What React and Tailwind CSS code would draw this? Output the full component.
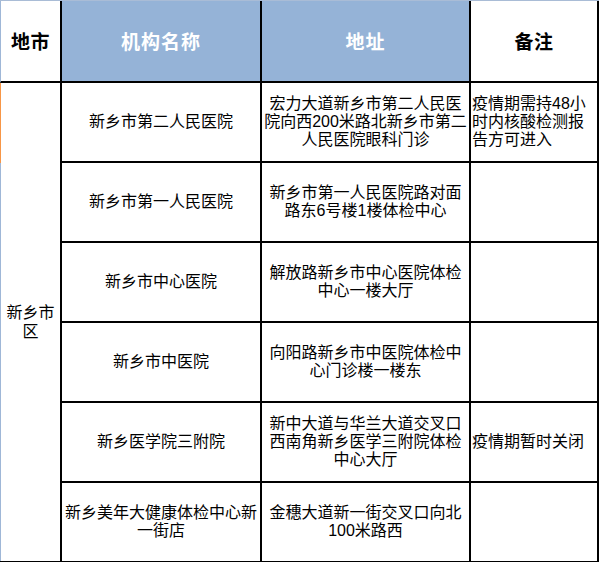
import React from "react";

const rows = [
  {
    name: "新乡市第二人民医院",
    address: "宏力大道新乡市第二人民医院向西200米路北新乡市第二人民医院眼科门诊",
    note: "疫情期需持48小时内核酸检测报告方可进入",
  },
  {
    name: "新乡市第一人民医院",
    address: "新乡市第一人民医院路对面路东6号楼1楼体检中心",
    note: "",
  },
  {
    name: "新乡市中心医院",
    address: "解放路新乡市中心医院体检中心一楼大厅",
    note: "",
  },
  {
    name: "新乡市中医院",
    address: "向阳路新乡市中医院体检中心门诊楼一楼东",
    note: "",
  },
  {
    name: "新乡医学院三附院",
    address: "新中大道与华兰大道交叉口西南角新乡医学三附院体检中心大厅",
    note: "疫情期暂时关闭",
  },
  {
    name: "新乡美年大健康体检中心新一街店",
    address: "金穗大道新一街交叉口向北100米路西",
    note: "",
  },
];

const font = {
  fontFamily: '"Liberation Sans", "Noto Sans CJK SC", sans-serif',
};

export default function App() {
  return (
    <div className="h-[562px] w-[599px] overflow-hidden bg-white text-black" style={font}>
      <div className="grid grid-cols-[62px_200px_209px_128px] grid-rows-[82px_repeat(6,80px)] border-t border-[#a9bcd6]">
        {/* header */}
        <div className="flex items-center justify-center border-b-2 border-l border-r-2 border-b-black border-l-[#9fb7d7] border-r-black pt-[4px] text-[19px] font-bold tracking-[0.5px]">
          地市
        </div>
        <div className="flex items-center justify-center border-b-2 border-r-2 border-black bg-[#95b3d7] pt-[4px] text-[19px] font-bold tracking-[1px] text-white">
          机构名称
        </div>
        <div className="flex items-center justify-center border-b-2 border-r-2 border-black bg-[#95b3d7] pt-[4px] text-[19px] font-bold tracking-[1px] text-white">
          地址
        </div>
        <div className="flex items-center justify-center border-b-2 border-r-2 border-black pt-[4px] text-[19px] font-bold tracking-[0.5px]">
          备注
        </div>

        {/* city cell spanning all rows */}
        <div className="row-span-6 flex border-b-2 border-r-2 border-black">
          <div className="flex w-px flex-col">
            <div className="h-[80px] bg-[#f79646]" />
            <div className="flex-1 bg-[#9fb7d7]" />
          </div>
          <div className="flex flex-1 items-center justify-center px-[4px] text-center text-[16px] leading-[19px]">
            新乡市区
          </div>
        </div>

        {rows.map((row) => (
          <React.Fragment key={row.name}>
            <div className="flex items-center justify-center border-b-2 border-r-2 border-black px-[2px] text-center text-[16px] leading-[18px]">
              {row.name}
            </div>
            <div className="flex items-center justify-center border-b-2 border-r-2 border-black px-[1px] text-center text-[16px] leading-[18px]">
              {row.address}
            </div>
            <div className="flex items-center border-b-2 border-r-2 border-black pl-[1px] text-left text-[16px] leading-[18px]">
              {row.note}
            </div>
          </React.Fragment>
        ))}
      </div>
    </div>
  );
}
